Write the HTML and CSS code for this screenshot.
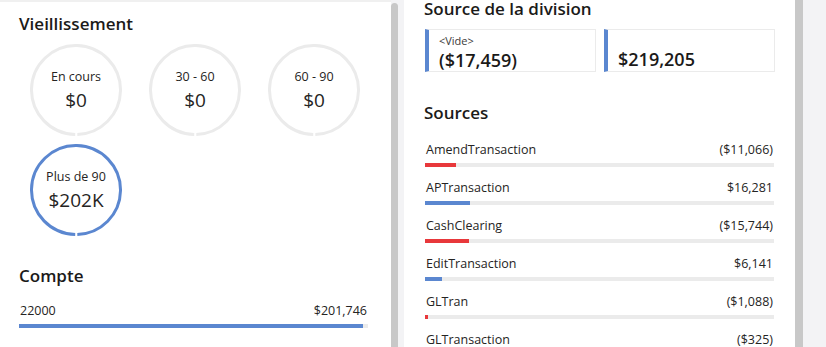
FILE: index.html
```html
<!DOCTYPE html>
<html lang="fr">
<head>
    <meta charset="UTF-8">
    <meta name="viewport" content="width=device-width, initial-scale=1.0">
    <title>Tableau de bord</title>
    <link rel="stylesheet" href="styles.css">
</head>
<body>
    <div class="board">
        <section class="panel panel-left">
            <h2 class="title">Vieillissement</h2>
            <div class="gauges">
                <div class="gauge">
                    <svg viewBox="0 0 92 92"><circle cx="46" cy="46" r="44.5" class="ring" stroke-dasharray="277 2.6" transform="rotate(91 46 46)"></circle></svg>
                    <div class="gauge-text"><span class="gauge-label">En cours</span><span class="gauge-value">$0</span></div>
                </div>
                <div class="gauge">
                    <svg viewBox="0 0 92 92"><circle cx="46" cy="46" r="44.5" class="ring" stroke-dasharray="277 2.6" transform="rotate(91 46 46)"></circle></svg>
                    <div class="gauge-text"><span class="gauge-label">30 - 60</span><span class="gauge-value">$0</span></div>
                </div>
                <div class="gauge">
                    <svg viewBox="0 0 92 92"><circle cx="46" cy="46" r="44.5" class="ring" stroke-dasharray="277 2.6" transform="rotate(91 46 46)"></circle></svg>
                    <div class="gauge-text"><span class="gauge-label">60 - 90</span><span class="gauge-value">$0</span></div>
                </div>
                <div class="gauge">
                    <svg viewBox="0 0 92 92"><circle cx="46" cy="46" r="44.5" class="ring ring-full" stroke-dasharray="277 2.6" transform="rotate(91 46 46)"></circle></svg>
                    <div class="gauge-text"><span class="gauge-label">Plus de 90</span><span class="gauge-value">$202K</span></div>
                </div>
            </div>

            <h2 class="title title-compte">Compte</h2>
            <div class="bar-row">
                <div class="bar-head"><span>22000</span><span>$201,746</span></div>
                <div class="track wide"><div class="fill blue" style="width: 98.6%;"></div></div>
            </div>
        </section>
        <div class="scrollbar"></div>

        <section class="panel panel-right">
            <h2 class="title title-top">Source de la division</h2>
            <div class="cards">
                <div class="card">
                    <span class="card-label">&lt;Vide&gt;</span>
                    <span class="card-value">($17,459)</span>
                </div>
                <div class="card">
                    <span class="card-label"></span>
                    <span class="card-value">$219,205</span>
                </div>
            </div>

            <h2 class="title title-sources">Sources</h2>
            <div class="rows">
                <div class="bar-row">
                    <div class="bar-head"><span>AmendTransaction</span><span>($11,066)</span></div>
                    <div class="track"><div class="fill red" style="width: 9%;"></div></div>
                </div>
                <div class="bar-row">
                    <div class="bar-head"><span>APTransaction</span><span>$16,281</span></div>
                    <div class="track"><div class="fill blue" style="width: 13%;"></div></div>
                </div>
                <div class="bar-row">
                    <div class="bar-head"><span>CashClearing</span><span>($15,744)</span></div>
                    <div class="track"><div class="fill red" style="width: 12.5%;"></div></div>
                </div>
                <div class="bar-row">
                    <div class="bar-head"><span>EditTransaction</span><span>$6,141</span></div>
                    <div class="track"><div class="fill blue" style="width: 5%;"></div></div>
                </div>
                <div class="bar-row">
                    <div class="bar-head"><span>GLTran</span><span>($1,088)</span></div>
                    <div class="track"><div class="fill red" style="width: 1%;"></div></div>
                </div>
                <div class="bar-row">
                    <div class="bar-head"><span>GLTransaction</span><span>($325)</span></div>
                    <div class="track"><div class="fill red" style="width: 0.4%;"></div></div>
                </div>
            </div>
        </section>
        <div class="scrollbar"></div>
    </div>
</body>
</html>
```

FILE: styles.css
```css
body {
    font-family: "Open Sans", "Noto Sans", sans-serif;
    background-color: #f3f3f5;
    margin: 0;
    padding: 0;
    color: #252423;
    overflow: hidden;
}

.board {
    display: flex;
    height: 347px;
}

.panel {
    background: #fff;
    overflow: hidden;
    box-sizing: border-box;
}

.panel-left {
    width: 391px;
    padding: 10px 0 0 19px;
    border-top: 2px solid #f0f0f0;
}

.panel-right {
    width: 391px;
    margin-left: 6px;
    padding: 0 20px 0 20px;
}

.scrollbar {
    width: 7px;
    background: #c8c8c8;
    border-radius: 4px 4px 0 0;
    margin-top: 3px;
}

.panel-right + .scrollbar {
    width: 8px;
    margin-top: 0;
    border-radius: 0;
}

.title {
    font-size: 17px;
    font-weight: 600;
    margin: 0;
    line-height: 24px;
    color: #1b1a19;
}

.title-top {
    line-height: 18px;
}

/* Aging gauges */
.gauges {
    display: grid;
    grid-template-columns: repeat(3, 92px);
    column-gap: 27px;
    row-gap: 8px;
    padding-left: 11px;
    margin-top: 8px;
}

.gauge {
    position: relative;
    width: 92px;
    height: 92px;
}

.gauge svg {
    width: 92px;
    height: 92px;
    display: block;
}

.ring {
    fill: none;
    stroke: #ebebeb;
    stroke-width: 3;
}

.ring-full {
    stroke: #5b87d0;
}

.gauge-text {
    position: absolute;
    inset: 0;
    display: flex;
    flex-direction: column;
    align-items: center;
    justify-content: center;
    padding-top: 1px;
}

.gauge-label {
    font-size: 12.5px;
    line-height: 18px;
}

.gauge-value {
    font-size: 19px;
    line-height: 28px;
}

.title-compte {
    margin-top: 28px;
}

/* Bars */
.bar-row {
    width: 349px;
}

.panel-left .bar-row {
    margin-top: 14px;
}

.bar-head {
    display: flex;
    justify-content: space-between;
    font-size: 12.5px;
    line-height: 18px;
    padding: 0 1px 0 1px;
}

.track {
    height: 4px;
    background: #ebebeb;
    margin-top: 4px;
}

.track.wide {
    margin-top: 4px;
}

.fill {
    height: 100%;
}

.fill.red {
    background: #e8383b;
}

.fill.blue {
    background: #5b87d0;
}

/* Division cards */
.cards {
    display: flex;
    gap: 8px;
    margin-top: 11px;
    padding-left: 1px;
}

.card {
    width: 171px;
    height: 43px;
    box-sizing: border-box;
    border: 1px solid #ebebeb;
    border-left: 4px solid #5b87d0;
    padding: 3px 0 0 10px;
    display: flex;
    flex-direction: column;
}

.card-label {
    font-size: 11px;
    line-height: 15px;
    height: 15px;
    color: #3b3a39;
}

.card-value {
    font-size: 18px;
    font-weight: 600;
    line-height: 24px;
    color: #1b1a19;
}

.title-sources {
    margin-top: 29px;
}

.rows {
    display: flex;
    flex-direction: column;
    gap: 12px;
    margin-top: 16px;
    padding-left: 1px;
}
```
